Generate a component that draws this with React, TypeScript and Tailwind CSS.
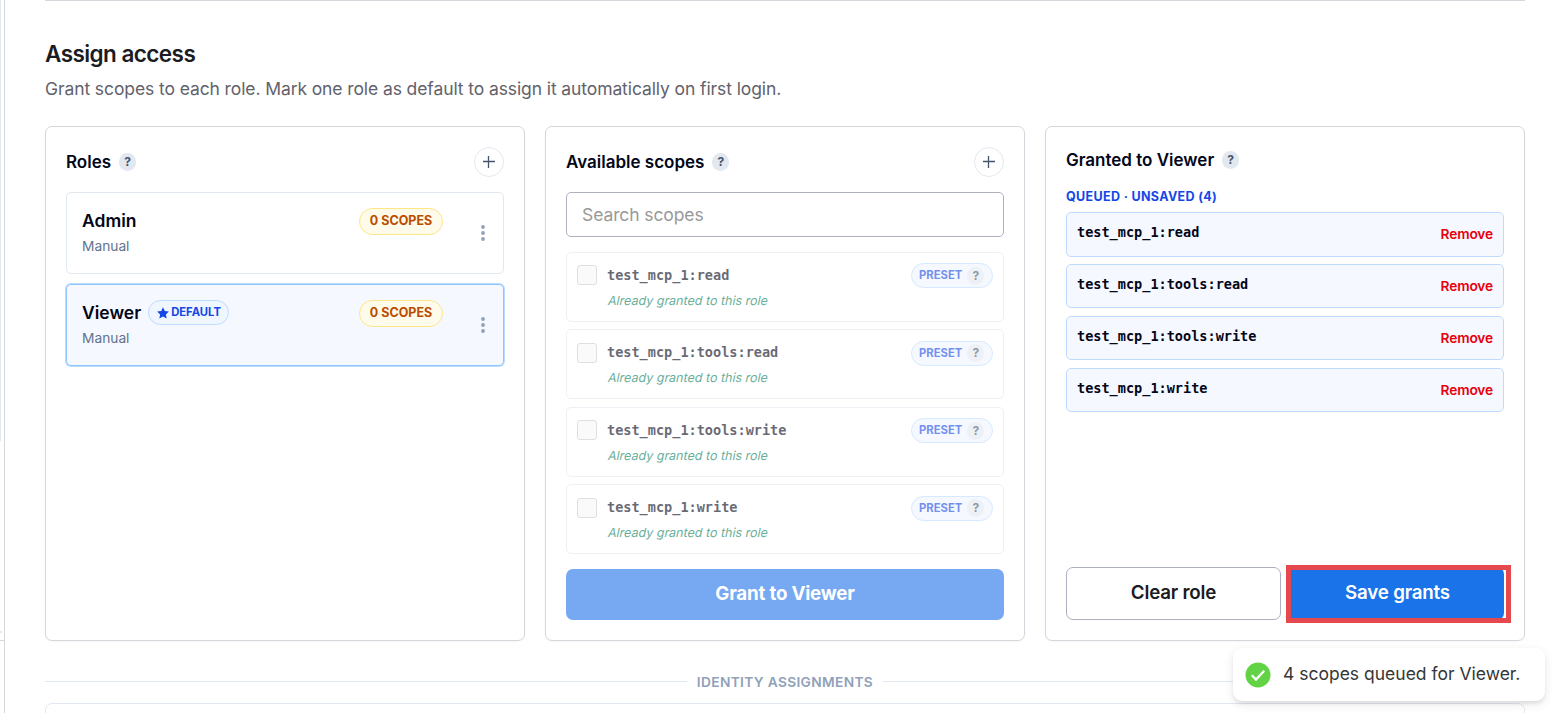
import type { ReactNode } from "react";
import { clsx } from "clsx";

interface Role {
    name: string
    isDefault: boolean
    isSelected: boolean
}

const roles: Role[] = [
    { name: 'Admin', isDefault: false, isSelected: false },
    { name: 'Viewer', isDefault: true, isSelected: true },
]

const scopes = ['test_mcp_1:read', 'test_mcp_1:tools:read', 'test_mcp_1:tools:write', 'test_mcp_1:write']

function Help({ className }: { className?: string }) {
    return (
        <span className={clsx('flex items-center justify-center shrink-0 w-[17px] h-[18px] rounded-full bg-slate-200 text-slate-600 text-[12px] leading-none font-bold', className)}>?</span>
    )
}

function AddButton() {
    return (
        <button className="flex items-center justify-center w-[30px] h-[30px] rounded-full border border-slate-200 text-slate-600">
            <svg width="12" height="12" viewBox="0 0 12 12" fill="none" stroke="currentColor" strokeWidth="1.3">
                <path d="M5.5 0v12M0 5.5h12" />
            </svg>
        </button>
    )
}

function Panel({ children }: { children: ReactNode }) {
    return (
        <section className="flex flex-col w-[480px] h-[515px] p-5 rounded-[7px] border border-[#d5d7dd] bg-white shadow-[0_1px_2px_rgba(0,0,0,0.04)]">{children}</section>
    )
}

function PanelTitle({ children }: { children: ReactNode }) {
    return <h3 className="text-[17px] leading-[24px] font-semibold text-[#020618]">{children}</h3>
}

function RoleCard({ role }: { role: Role }) {
    return (
        <div className={clsx('flex h-[82px] rounded-[5px] border pl-[15px] pr-[17px]', role.isSelected ? 'border-[#8ec5ff] bg-[#f5f8ff] shadow-[0_0_0_1px_rgba(142,197,255,0.6)]' : 'border-slate-200')}>
            <div className="pt-[15px]">
                <div className="flex items-center h-[26px] text-[17.5px] font-semibold text-[#020618]">
                    {role.name}
                    {role.isDefault && (
                        <span className="flex items-center gap-[2px] w-[81px] h-[25px] ml-[7px] mb-px pl-2 rounded-full border border-[#bedbff] bg-[#eff6ff] text-[#1447e6] text-[11.25px] font-bold">
                            <svg className="shrink-0" width="12" height="12" viewBox="0 0 24 24" fill="currentColor">
                                <path d="M12 .6l3.6 7.4 8.1 1.1-5.9 5.7 1.5 8.1-7.3-3.9-7.3 3.9 1.5-8.1L.3 9.1 8.4 8z" />
                            </svg>
                            DEFAULT
                        </span>
                    )}
                </div>
                <div className="mt-[2px] text-[13.75px] leading-[20px] text-slate-500">Manual</div>
            </div>
            <span className="flex items-center justify-center w-[84px] h-[27px] mt-[15px] ml-auto rounded-full border border-[#fee685] bg-[#fffbeb] text-[#bb4d00] text-[12.5px] font-bold pb-px">0 SCOPES</span>
            <svg className="ml-[37px] mt-[32px]" width="6" height="16" viewBox="0 0 6 16" fill="#90a1b9">
                <circle cx="3" cy="2" r="1.9" />
                <circle cx="3" cy="8" r="1.9" />
                <circle cx="3" cy="14" r="1.9" />
            </svg>
        </div>
    )
}

function ScopeCard({ scope }: { scope: string }) {
    return (
        <div className="flex h-[70px] px-[10px] rounded-[5px] border border-slate-200 opacity-60">
            <span className="w-5 h-5 mt-[12.35px] rounded-[3px] border border-[#cbcbcb] bg-[#f7f7f7]" />
            <div className="ml-[10px] pt-[12px]">
                <div className="font-['DejaVu_Sans_Mono',monospace] text-[13.55px] leading-[20px] font-bold text-[#020618]">{scope}</div>
                <div className="mt-[6px] ml-[0.5px] text-[12.5px] leading-[20px] -skew-x-12 text-[#007a55]">Already granted to this role</div>
            </div>
            <span className="flex items-center h-[25px] w-[82px] mt-[10.35px] ml-auto pl-[7px] rounded-full border border-[#bedbff] bg-[#eff6ff] text-[#1447e6] text-[11.25px] font-bold">
                PRESET
                <Help className="ml-[5px]" />
            </span>
        </div>
    )
}

function Toast() {
    return (
        <div className="absolute left-[1233px] top-[648px] flex items-center w-[312px] h-[53px] pl-[12.4px] rounded-[9px] bg-white text-[#363636] text-[17.5px] shadow-[0_3px_10px_rgba(0,0,0,0.1),0_3px_3px_rgba(0,0,0,0.05)] whitespace-nowrap">
            <svg className="mr-[11.6px]" width="26" height="26" viewBox="0 0 26 26" fill="none">
                <circle cx="13" cy="13" r="12.5" fill="#61d345" />
                <path d="M6.8 13.3l4.2 4.2L19.2 8.8" stroke="#fff" strokeWidth="2.3" />
            </svg>
            4 scopes queued for Viewer.
        </div>
    )
}

export default function App() {
    return (
        <div className="relative flex w-[1562px] h-[713px] overflow-hidden bg-white font-['Inter',sans-serif] whitespace-nowrap">
            <aside className="w-[5px] shrink-0 border-r border-[#d5d7dd]">
                <div className="w-px h-[441px] bg-slate-200" />
                <div className="w-[2px] h-[2px] mt-[190px] bg-slate-200" />
                <div className="mt-[7px] h-px bg-[#d5d7dd]" />
            </aside>
            <main className="w-[1480px] ml-10 shrink-0">
                <hr className="border-t border-[#d5d7dd]" />
                <h2 className="mt-[37px] text-[22.5px] leading-[32px] font-semibold tracking-[-0.56px] text-[#1b1b22]">Assign access</h2>
                <p className="mt-[6px] text-[17.5px] leading-[26px] tracking-[-0.1px] text-[#62626b]">Grant scopes to each role. Mark one role as default to assign it automatically on first login.</p>
                <div className="flex gap-5 mt-[24px]">
                    <Panel>
                        <div className="flex items-center h-[30px]">
                            <PanelTitle>Roles</PanelTitle>
                            <Help className="ml-2 mr-auto" />
                            <AddButton />
                        </div>
                        <div className="flex flex-col gap-[10px] mt-[15px]">
                            {roles.map(role => <RoleCard key={role.name} role={role} />)}
                        </div>
                    </Panel>
                    <Panel>
                        <div className="flex items-center h-[30px]">
                            <PanelTitle>Available scopes</PanelTitle>
                            <Help className="ml-2 mr-auto" />
                            <AddButton />
                        </div>
                        <input className="shrink-0 h-[45px] mt-[15px] px-[15px] rounded-[5px] border border-[#adb1bf] text-[17.5px] tracking-[-0.1px] placeholder:text-[#999]" placeholder="Search scopes" />
                        <div className="flex flex-col gap-[7.4px] mt-[15px]">
                            {scopes.map(scope => <ScopeCard key={scope} scope={scope} />)}
                        </div>
                        <button className="mt-auto h-[51px] rounded-[7px] bg-[#76a9f1] text-white text-[18.75px] font-bold tracking-[-0.2px]">Grant to Viewer</button>
                    </Panel>
                    <Panel>
                        <div className="flex items-center h-[26px]">
                            <PanelTitle>Granted to Viewer</PanelTitle>
                            <Help className="ml-2" />
                        </div>
                        <div className="mt-[14px] text-[12.5px] leading-[20px] font-bold text-[#1447e6] tracking-[0.35px]">QUEUED · UNSAVED (4)</div>
                        <ul className="flex flex-col gap-[7.6px] mt-[5.4px]">
                            {scopes.map(scope => (
                                <li key={scope} className="flex justify-between h-[44.2px] px-[10px] rounded-[5px] border border-[#bedbff] bg-[#f5f8ff]">
                                    <span className="pt-[9px] font-['DejaVu_Sans_Mono',monospace] text-[13.55px] leading-[20px] font-bold text-[#020618]">{scope}</span>
                                    <button className="text-[13.75px] font-semibold tracking-[-0.15px] text-[#e7000b]">Remove</button>
                                </li>
                            ))}
                        </ul>
                        <div className="flex gap-2 mt-auto">
                            <button className="w-[215px] h-[53px] rounded-[7px] border border-[#adb1bf] text-[18.75px] leading-[27px] pb-[3px] font-semibold tracking-[-0.2px] text-[#1b1b22]">Clear role</button>
                            <button className="w-[215px] h-[53px] rounded-[7px] bg-[#1a73e8] text-[18.75px] leading-[27px] pb-[3px] pl-[2px] font-semibold tracking-[-0.2px] text-white">Save grants</button>
                        </div>
                    </Panel>
                </div>
                <div className="flex items-center gap-[10px] h-5 mt-[31px]">
                    <div className="flex-1 h-px mb-[2px] bg-slate-200" />
                    <span className="text-[13.75px] font-semibold text-[#90a1b9] tracking-[0.33px]">IDENTITY ASSIGNMENTS</span>
                    <div className="flex-1 h-px mb-[2px] bg-slate-200" />
                </div>
                <section className="h-10 mt-[11px] rounded-[7px] border border-slate-200" />
            </main>
            <div className="absolute left-[1286px] top-[565px] w-[225px] h-[58px] border-5 border-[#e5484d]" />
            <Toast />
        </div>
    )
}
